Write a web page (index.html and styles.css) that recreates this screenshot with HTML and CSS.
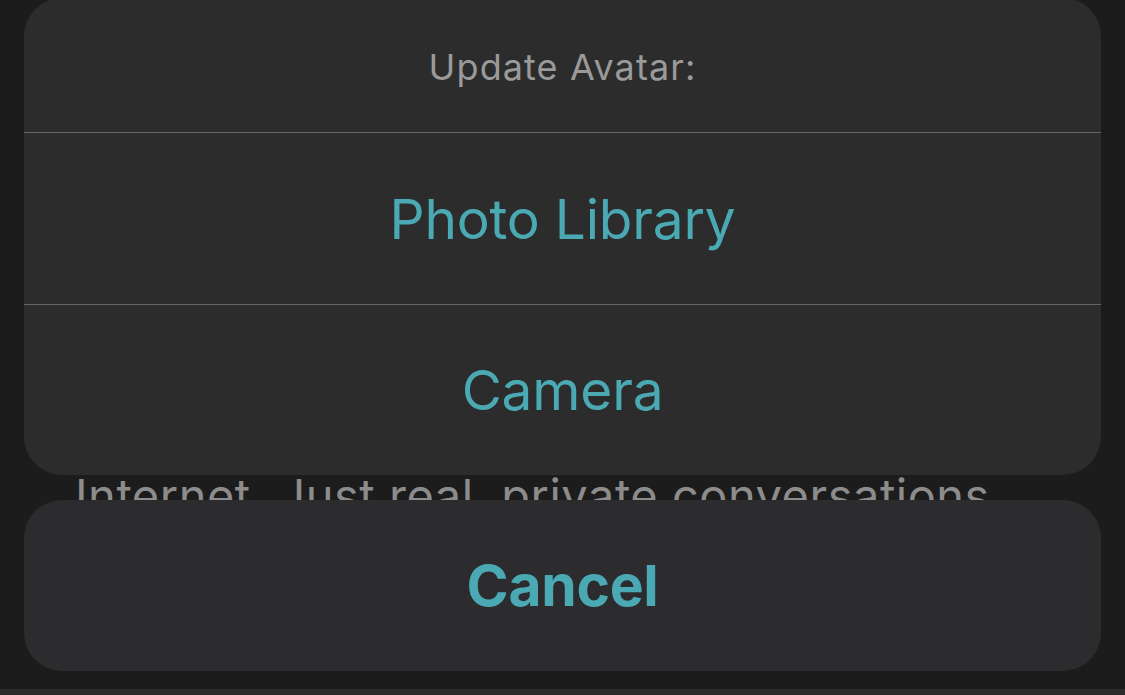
FILE: index.html
```html
<!DOCTYPE html>
<html>
<head>
<meta charset="utf-8">
<link rel="stylesheet" href="styles.css">
</head>
<body>
<main class="page">
  <p class="intro">Internet. Just real, private conversations.</p>
  <div class="bottom-bar"></div>
</main>
<div class="sheet">
  <div class="group">
    <div class="title">Update Avatar:</div>
    <div class="action">Photo Library</div>
    <div class="action">Camera</div>
  </div>
  <div class="group cancel-group">
    <div class="action cancel">Cancel</div>
  </div>
</div>
</body>
</html>
```

FILE: styles.css
```css
html, body {
  margin: 0;
  padding: 0;
  height: 100%;
  background: #1c1c1c;
  font-family: Inter, "Noto Sans", "Liberation Sans", sans-serif;
  overflow: hidden;
}

.page {
  height: 695px;
  display: flex;
  flex-direction: column;
  padding: 0 75px;
  box-sizing: border-box;
}

.intro {
  margin: 468px 0 0 0;
  font-size: 47px;
  line-height: 56px;
  color: #8c8c8c;
  letter-spacing: 0.5px;
  white-space: nowrap;
}

.bottom-bar {
  margin: auto -75px 0;
  height: 6px;
  background: #2b2b2b;
}

.sheet {
  position: absolute;
  left: 24px;
  right: 24px;
  top: -2px;
  display: flex;
  flex-direction: column;
  gap: 25px;
}

.group {
  background: #2c2c2c;
  border-radius: 38px;
  overflow: hidden;
  display: flex;
  flex-direction: column;
}

.title {
  height: 135px;
  padding-top: 4px;
  display: flex;
  align-items: center;
  justify-content: center;
  font-size: 36px;
  color: #9a9a9a;
  letter-spacing: 1.1px;
  border-bottom: 1px solid #666666;
  box-sizing: border-box;
}

.action {
  height: 171px;
  display: flex;
  align-items: center;
  justify-content: center;
  font-size: 55px;
  color: #4ba9b4;
  letter-spacing: -0.2px;
  box-sizing: border-box;
}

.action + .action {
  border-top: 1px solid #666666;
  height: 171px;
}

.cancel-group {
  background: #2c2c2e;
}

.cancel {
  height: 171px;
  font-weight: 700;
  font-size: 57px;
  letter-spacing: -0.3px;
}
```
